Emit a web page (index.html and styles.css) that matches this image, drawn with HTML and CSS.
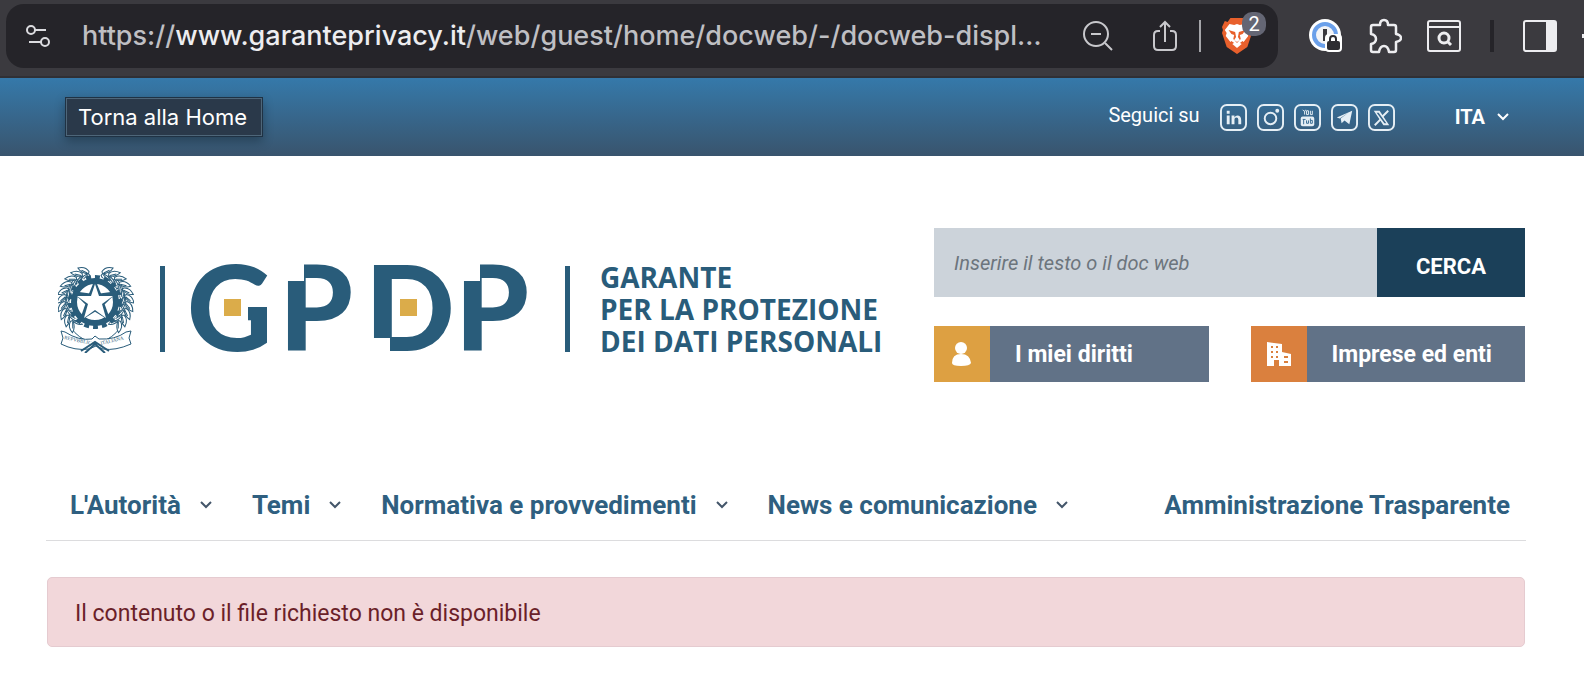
FILE: index.html
```html
<!DOCTYPE html>
<html lang="it">
<head>
  <meta charset="UTF-8" />
  <title>Garante Privacy</title>
  <link rel="stylesheet" href="styles.css">
</head>
<body>

  <!-- BARRA DEL BROWSER -->
  <div class="browser">
    <div class="address">
      <svg class="tune" width="26" height="26" viewBox="0 0 26 26" fill="none" stroke="#dcdce0" stroke-width="2">
        <circle cx="6" cy="7" r="4" /><path d="M10 7h11M4 19h12" /><circle cx="20" cy="19" r="4" />
      </svg>
      <span class="url">https://<b>www.garanteprivacy.it</b>/web/guest/home/docweb/-/docweb-displ…</span>
      <span class="address-icons">
        <svg class="zoom-out" width="32" height="32" viewBox="0 0 32 32" fill="none" stroke="#c8c8cc" stroke-width="2">
          <circle cx="14" cy="14" r="12" /><path d="M9 14h10M23 23l7 7" />
        </svg>
        <svg width="26" height="32" viewBox="0 0 26 32" fill="none" stroke="#c8c8cc" stroke-width="2">
          <path d="M8 11H6q-4 0-4 4v11q0 4 4 4h14q4 0 4-4V15q0-4-4-4h-2M13 22V2M8 7l5-5 5 5" />
        </svg>
        <i class="sep"></i>
        <span class="brave">
          <svg width="30" height="36" viewBox="0 0 32 36" preserveAspectRatio="none">
            <path fill="#e8602c" d="M9 0h14l3 4 3-1 3 6-1 3 1 3-5 14-11 7-11-7-5-14 1-3-1-3 3-6 3 1z" />
            <path fill="#fff" d="M8 6l5 1 3-1 3 1 5-1 5 6-2 3 1 3-5 6-1-1-6 4-6-4-1 1-5-6 1-3-2-3z" />
            <path fill="#fff" d="M11 26l5-3 5 3-5 4z" />
            <path fill="#e8602c" d="M7 12l7 2 1 5-2 3 3 2 3-2-2-3 1-5 7-2-3 4-3 1 1 4-4 4-4-4 1-4-3-1z" />
          </svg>
          <span class="badge">2</span>
        </span>
      </span>
    </div>
    <div class="extensions">
      <svg width="34" height="34" viewBox="0 0 34 34">
        <circle cx="16" cy="16" r="16" fill="#fff" /><circle cx="16" cy="16" r="11" fill="#f4f4f6" stroke="#6ba0ea" stroke-width="4" />
        <rect x="14" y="10" width="4" height="12" fill="#3a393e" />
        <rect x="16" y="15" width="17" height="18" rx="4" fill="#fff" />
        <rect x="18" y="22" width="13" height="9" rx="2" fill="#2e2d32" /><path d="M21 23v-3q0-3 3-3t3 3v3" fill="none" stroke="#2e2d32" stroke-width="2" />
      </svg>
      <svg width="34" height="36" viewBox="0 0 34 36" fill="none" stroke="#ededf0" stroke-width="2.5" stroke-linejoin="round">
        <path d="M5 7h7q0-5 4-5t4 5h6q2 0 2 2v7q5 1 5 4t-5 4v8q0 2-2 2h-5q-1-6-5-6t-5 6H5q-2 0-2-2v-6q5-1 5-5t-5-5V9q0-2 2-2z" />
      </svg>
      <svg width="34" height="32" viewBox="0 0 34 32" fill="none" stroke="#ededf0" stroke-width="2">
        <rect x="1" y="1" width="32" height="30" rx="2" /><path d="M2 7h30" /><circle cx="17" cy="18" r="5" stroke-width="3" /><path stroke-width="3" d="M20 21l4 4" />
      </svg>
      <i class="sep dark"></i>
      <svg width="34" height="32" viewBox="0 0 34 32">
        <rect x="1" y="1" width="32" height="30" rx="2" fill="none" stroke="#ededf0" stroke-width="2" /><path fill="#ededf0" d="M23 1h10v30H23z" />
      </svg>
      <i class="edge"></i>
    </div>
  </div>

  <!-- BARRA SUPERIORE -->
  <div class="topbar">
    <a class="home" href="#">Torna alla Home</a>
    <div class="social">
      <span>Seguici su</span>
      <a href="#" aria-label="LinkedIn"><svg viewBox="0 0 28 28"><rect class="frame" x="1" y="1" width="26" height="26" rx="6" /><path d="M7 12h3v9H7zM7 7h3v3H7zM12 12h3v2q1-2 3-2 4 0 4 5v4h-3v-5q0-2-2-2t-2 2v5h-3z" /></svg></a>
      <a href="#" aria-label="Instagram"><svg viewBox="0 0 28 28"><rect class="frame" x="1" y="1" width="26" height="26" rx="6" /><circle class="line" cx="14" cy="15" r="6" /><circle cx="21" cy="7" r="2" /></svg></a>
      <a href="#" aria-label="YouTube"><svg viewBox="0 0 28 28"><rect class="frame" x="1" y="1" width="26" height="26" rx="6" /><rect x="7" y="13" width="14" height="10" rx="2" /><path class="thin" d="M9 6l2 2 1-2M11 8v3M13 7v4h2V7zM17 7v4h2V7" /><path class="cut" d="M9 16h3M10 16v5M13 17v3h2v-3M17 15v5h2v-3h-2" /></svg></a>
      <a href="#" aria-label="Telegram"><svg viewBox="0 0 28 28"><rect class="frame" x="1" y="1" width="26" height="26" rx="6" /><path d="M6 14l16-7-3 14-5-4-3 3-1-5 8-6-9 6z" /></svg></a>
      <a href="#" aria-label="X"><svg viewBox="0 0 28 28"><rect class="frame" x="1" y="1" width="26" height="26" rx="6" /><path fill-rule="evenodd" d="M6 7h6l10 15h-6zM9 9l8 11h2L11 9z" /><path class="line" d="M21 7l-6 6M13 16l-6 6" /></svg></a>
    </div>
    <button class="lang">ITA <svg class="chevron" viewBox="0 0 12 8"><path d="M1 1l5 5 5-5" /></svg></button>
  </div>

  <div class="container">
    <!-- TESTATA -->
    <header class="header">
      <a class="logo" href="#">
        <svg class="emblem" viewBox="0 0 76 88" fill="none" stroke="#295c7a">
          <defs>
            <g id="leaf">
              <path fill="#fff" d="M37 8q-7-2-9-8 8 0 10 6z" />
              <path fill="#fff" d="M37 8q-6 0-9 5 7 2 10-3z" />
              <path d="M36 7l-5-4M36 9l-5 3" />
            </g>
            <g id="branch">
              <path d="M40 80Q10 72 7 46 5 18 28 5" />
              <use href="#leaf" transform="rotate(-130 37 37)" />
              <use href="#leaf" transform="rotate(-117 37 37)" />
              <use href="#leaf" transform="rotate(-104 37 37)" />
              <use href="#leaf" transform="rotate(-91 37 37)" />
              <use href="#leaf" transform="rotate(-78 37 37)" />
              <use href="#leaf" transform="rotate(-65 37 37)" />
              <use href="#leaf" transform="rotate(-52 37 37)" />
              <use href="#leaf" transform="rotate(-39 37 37)" />
              <use href="#leaf" transform="rotate(-26 37 37)" />
              <use href="#leaf" transform="rotate(-13 37 37)" />
            </g>
          </defs>
          <g stroke-width="1">
            <use href="#branch" />
            <use href="#branch" transform="translate(75 0) scale(-1 1)" />
          </g>
          <circle cx="37" cy="37" r="25" fill="#fff" stroke="none" />
          <circle cx="37" cy="37" r="25" stroke-width="4" stroke-dasharray="5 4" />
          <circle cx="37" cy="37" r="21" stroke-width="6" />
          <path fill="#295c7a" stroke-width="3" d="M37 18l5 12 14-2-11 11 5 14-13-8-13 8 5-14-11-11 14 2z" />
          <path fill="#fff" stroke="none" d="M37 19l4 12h14l-11 8 4 14-11-8-11 8 4-14-11-8h14z" />
          <path fill="#fff" d="M3 66l4 1q14 9 27 7l3-3 4 3q16 1 27-7l5-1-2 7 2 6q-16 7-28 5l-7-3-7 3q-14 2-28-5l2-6z" />
          <path stroke-width="2" d="M23 86l14-9 14 9M27 88l10-9 10 9" />
          <text class="motto" x="6" y="74" transform="rotate(12 6 74)">REPVBBLICA</text>
          <text class="motto" x="43" y="80" transform="rotate(-14 43 80)">ITALIANA</text>
        </svg>
        <i class="rule"></i>
        <svg class="gpdp" viewBox="-6 -30 354 150" role="img" aria-label="GPDP">
          <text y="87"><tspan x="-4">G</tspan><tspan x="88">P</tspan><tspan x="174">D</tspan><tspan x="264">P</tspan></text>
          <path class="notch" d="M94 0h19v17H94zM180 74h19v17h-19zM270 0h19v17h-19zM42 35h15v24H42z" />
          <path class="gold" d="M33 35h17v17H33zM209 35h17v17h-17z" />
        </svg>
        <i class="rule"></i>
        <span class="name">GARANTE<br />PER LA PROTEZIONE<br />DEI DATI PERSONALI</span>
      </a>
      <div class="tools">
        <form class="search">
          <input type="text" aria-label="Cerca" placeholder="Inserire il testo o il doc web" />
          <button type="button">CERCA</button>
        </form>
        <div class="shortcuts">
          <a class="shortcut rights" href="#">
            <svg viewBox="0 0 56 56"><circle cx="27" cy="22" r="6" /><path d="M18 37q0-9 9-9t10 9q-1 3-10 3t-9-3z" /></svg>
            <span>I miei diritti</span>
          </a>
          <a class="shortcut firms" href="#">
            <svg viewBox="0 0 56 56"><path fill-rule="evenodd" d="M16 16l15 2v8l9 2v12H28v-6h-5v6h-7zM20 20v2h2v-2zM25 20v2h2v-2zM20 25v2h2v-2zM25 25v2h2v-2zM20 30v2h2v-2zM25 30v2h2v-2zM33 30v2h4v-2zM33 35v2h4v-2z" /></svg>
            <span>Imprese ed enti</span>
          </a>
        </div>
      </div>
    </header>

    <!-- MENU -->
    <nav class="menu">
      <a href="#">L'Autorità <svg class="chevron" viewBox="0 0 12 8"><path d="M1 1l5 5 5-5" /></svg></a>
      <a href="#">Temi <svg class="chevron" viewBox="0 0 12 8"><path d="M1 1l5 5 5-5" /></svg></a>
      <a href="#">Normativa e provvedimenti <svg class="chevron" viewBox="0 0 12 8"><path d="M1 1l5 5 5-5" /></svg></a>
      <a href="#">News e comunicazione <svg class="chevron" viewBox="0 0 12 8"><path d="M1 1l5 5 5-5" /></svg></a>
      <a class="last" href="#">Amministrazione Trasparente</a>
    </nav>

    <div class="alert" role="alert">Il contenuto o il file richiesto non è disponibile</div>
  </div>

</body>
</html>
```

FILE: styles.css
```css
* {
  box-sizing: border-box;
}
body {
  margin: 0;
  font-family: Roboto, "Liberation Sans", sans-serif;
  font-size: 23px;
  background: #fff;
}
a {
  color: inherit;
  text-decoration: none;
}
button {
  border: none;
  font-family: inherit;
  cursor: pointer;
}
svg {
  display: block;
  flex: none;
}

/* browser */
.browser {
  display: flex;
  height: 78px;
  padding: 4px 0 8px 6px;
  background: #3b3a3f;
  border-bottom: 2px solid #303035;
}
.address {
  display: flex;
  align-items: center;
  flex: 1;
  min-width: 0;
  padding: 0 12px 0 19px;
  background: #252429;
  border-radius: 18px;
}
.url {
  flex: 1;
  margin-left: 31px;
  font-family: Inter, sans-serif;
  font-size: 27px;
  font-weight: 500;
  line-height: 36px;
  color: #bfbfc3;
  white-space: nowrap;
}
.url b {
  font-weight: 500;
  color: #ededf0;
}
.address-icons {
  display: flex;
  align-items: center;
  gap: 21px;
}
.zoom-out {
  margin-right: 17px;
}
.sep {
  width: 2px;
  height: 32px;
  background: #a5a5a9;
}
.sep.dark {
  width: 4px;
  margin: 0 4px;
  background: #252429;
}
.brave {
  position: relative;
  width: 44px;
}
.badge {
  position: absolute;
  top: -6px;
  right: 0;
  width: 24px;
  border-radius: 10px;
  background: #646674;
  color: #fff;
  font-size: 20px;
  line-height: 24px;
  text-align: center;
}
.extensions {
  display: flex;
  align-items: center;
  gap: 25px;
  padding-left: 31px;
}
.edge {
  width: 2px;
  height: 4px;
  background: #ededf0;
}

/* top bar */
.topbar {
  display: flex;
  align-items: center;
  height: 78px;
  padding: 0 75px 0 65px;
  background: linear-gradient(#3579aa, #39546d);
  color: #fff;
}
.home {
  padding: 0 15px 0 12px;
  border: 1px solid #1f3244;
  background: #2a394a;
  box-shadow: inset 0 0 0 1px #4e6679, 0 4px 10px rgba(0, 0, 0, 0.3);
  font-family: Inter, sans-serif;
  font-size: 22px;
  line-height: 38px;
}
.social {
  display: flex;
  align-items: center;
  gap: 10px;
  margin-left: auto;
  font-size: 20px;
}
.social span {
  margin-right: 10px;
  padding-bottom: 4px;
}
.social svg {
  width: 27px;
  height: 27px;
  fill: #e6eff5;
}
.social .frame,
.social .line {
  fill: none;
  stroke: #e6eff5;
  stroke-width: 2;
}
.social .thin {
  fill: none;
  stroke: #e6eff5;
}
.social .cut {
  fill: none;
  stroke: #366b93;
}
.chevron {
  width: 12px;
  height: 8px;
  fill: none;
  stroke: currentColor;
  stroke-width: 2;
}
.lang {
  display: flex;
  align-items: center;
  gap: 12px;
  margin-left: 60px;
  padding: 0;
  background: none;
  color: #fff;
  font-size: 20px;
  font-weight: bold;
}

/* header */
.container {
  padding: 0 58px 0 46px;
}
.header {
  display: flex;
  align-items: flex-start;
  justify-content: space-between;
  padding: 72px 1px 0 0;
}
.logo {
  display: flex;
  align-items: center;
  padding: 6px 0 0 12px;
  color: #295c7a;
}
.emblem {
  width: 76px;
  height: 88px;
}
.motto {
  fill: #295c7a;
  stroke: none;
  font-family: "Liberation Serif", serif;
  font-size: 5px;
}
.rule {
  width: 5px;
  height: 86px;
  margin: 0 20px 0 26px;
  background: #295c7a;
}
.gpdp {
  width: 354px;
  height: 150px;
  font-family: Lato, sans-serif;
  font-size: 118px;
  font-weight: 900;
  fill: #295c7a;
}
.notch {
  fill: #fff;
}
.gold {
  fill: #dbac4a;
}
.name {
  margin-left: 10px;
  font-family: "Open Sans", sans-serif;
  font-size: 28px;
  font-weight: 700;
  line-height: 32px;
  white-space: nowrap;
}
.tools {
  width: 591px;
}
.search {
  display: flex;
  height: 69px;
}
.search input {
  flex: 1;
  min-width: 0;
  padding: 0 20px;
  border: none;
  background: #ccd3da;
  font-family: inherit;
  font-size: 20px;
  font-style: italic;
}
.search input::placeholder {
  color: #6c757d;
}
.search button {
  width: 148px;
  padding: 8px 0 0;
  background: #1b4059;
  color: #fff;
  font-size: 22px;
  font-weight: bold;
}
.shortcuts {
  display: grid;
  grid-template-columns: 1fr 1fr;
  gap: 42px;
  margin-top: 29px;
}
.shortcut {
  display: flex;
  align-items: center;
  background: #617287;
  color: #fff;
  font-weight: bold;
}
.shortcut svg {
  width: 56px;
  height: 56px;
  margin-right: 25px;
  fill: #fff;
}
.rights svg {
  background: #dda042;
}
.firms svg {
  background: #da803e;
}

/* menu */
.menu {
  display: flex;
  margin-top: 94px;
  padding: 0 16px 8px 24px;
  border-bottom: 1px solid #dcdcde;
  color: #2f5f80;
  font-size: 26px;
  font-weight: bold;
  line-height: 54px;
}
.menu a {
  display: flex;
  align-items: center;
  gap: 19px;
  margin-right: 40px;
}
.menu .last {
  margin: 0 0 0 auto;
}
.menu .chevron {
  color: #44566a;
}
.alert {
  margin: 36px 1px 0;
  padding: 4px 27px 0;
  border: 1px solid #e5cbd0;
  border-radius: 5px;
  background: #f2d7da;
  color: #6b1f29;
  line-height: 64px;
}
```
